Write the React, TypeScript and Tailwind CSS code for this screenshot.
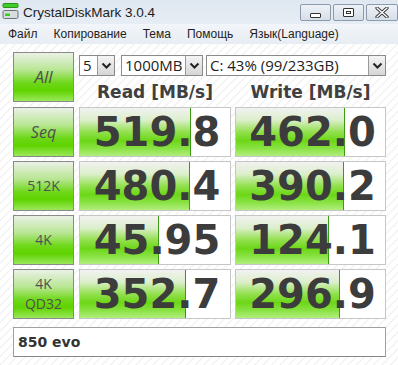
import React from 'react';

const hatch =
  'bg-white bg-[repeating-linear-gradient(135deg,#ffffff_0px,#ffffff_4px,#eeeeee_5px,#ffffff_6px)]';

const btnGrad =
  'bg-[linear-gradient(to_bottom,#eaf1e6_0%,#b9e694_35%,#6fd81a_62%,#5fd300_78%,#9be85a_100%)]';

const barGrad =
  'bg-[linear-gradient(to_bottom,#f2f2f1_0%,#dcefcc_25%,#92e04e_50%,#6cd716_68%,#8be346_85%,#b2ee7e_100%)]';

const rows = [
  { label: ['Seq'], read: '519.8', rw: 111, write: '462.0', ww: 109, italic: true },
  { label: ['512K'], read: '480.4', rw: 110, write: '390.2', ww: 108 },
  { label: ['4K'], read: '45.95', rw: 79, write: '124.1', ww: 93 },
  { label: ['4K', 'QD32'], read: '352.7', rw: 106, write: '296.9', ww: 104 },
];

function Arrow() {
  return (
    <div className="w-[17px] h-full flex items-center justify-center border-l border-[#9a9a9a] bg-[linear-gradient(to_bottom,#f4f4f4,#d6d6d6)]">
      <svg width="11" height="8" viewBox="0 0 11 8">
        <path d="M1.5 1.5 L5.5 5.5 L9.5 1.5" fill="none" stroke="#222" strokeWidth="2" />
      </svg>
    </div>
  );
}

function Select({ value, width }: { value: string; width: string }) {
  return (
    <div className={`${width} h-[21px] flex border border-[#8a8a8a] bg-white`}>
      <div className="flex-1 pl-[3px] text-[15px] leading-[19px] text-[#222]">{value}</div>
      <Arrow />
    </div>
  );
}

function Bar({ value, width }: { value: string; width: number }) {
  return (
    <div className="relative h-[50px] border border-[#c6c6c6] bg-white overflow-hidden">
      <div
        className={`absolute left-0 top-0 bottom-0 ${barGrad} border-r border-[#3c9a12]`}
        style={{ width }}
      />
      <div className="relative h-full flex items-center justify-center pl-[4px] text-[40px] font-bold leading-none text-[#3c3c3c] [font-family:'DejaVu_Sans',sans-serif]">
        {value}
      </div>
    </div>
  );
}

function WinBtn({ children, w }: { children: React.ReactNode; w: string }) {
  return (
    <div className={`${w} h-[17px] flex items-center justify-center border border-[#8c9aab] rounded-[2px] bg-[linear-gradient(to_bottom,#eef2f7,#d6dee8)]`}>
      {children}
    </div>
  );
}

export default function App() {
  return (
    <div className="w-[398px] h-[365px] overflow-hidden bg-[#f0f3f7] [font-family:'Open_Sans','DejaVu_Sans',sans-serif]">
      {/* title bar */}
      <div className="h-[24px] flex items-start bg-[linear-gradient(to_bottom,#dfe7f0,#e7edf4)]">
        <svg className="ml-[2px] mt-[3px]" width="17" height="16" viewBox="0 0 17 16">
          <rect x="1" y="0.5" width="15" height="4" rx="1" fill="#3fcf2a" stroke="#2c8f1e" />
          <rect x="1" y="7.5" width="15" height="8" rx="1.5" fill="#d8dcdf" stroke="#6b7177" />
          <rect x="3" y="10.5" width="5" height="2.5" fill="#35d11c" />
        </svg>
        <div className="ml-[4px] mt-[4px] text-[13.5px] leading-[18px] text-[#1e1e1e] [font-family:'Liberation_Sans',sans-serif]">
          CrystalDiskMark 3.0.4
        </div>
        <div className="ml-auto mt-[4px] flex gap-[2px]">
          <WinBtn w="w-[31px]">
            <div className="w-[11px] h-[5px] border border-[#333] rounded-[1px] bg-white mt-[5px]" />
          </WinBtn>
          <WinBtn w="w-[31px]">
            <div className="w-[11px] h-[9px] border border-[#333] rounded-[1px] bg-white flex items-center justify-center">
              <div className="w-[5px] h-[3px] border border-[#333]" />
            </div>
          </WinBtn>
          <WinBtn w="w-[32px]">
            <svg width="14" height="11" viewBox="0 0 14 11">
              <path d="M2 1 L12 10 M12 1 L2 10" stroke="#333" strokeWidth="3.2" strokeLinecap="round" />
              <path d="M2 1 L12 10 M12 1 L2 10" stroke="#fff" strokeWidth="1.4" strokeLinecap="round" />
            </svg>
          </WinBtn>
        </div>
      </div>

      {/* menu bar */}
      <div className="h-[20px] flex items-center pl-[8px] gap-[16px] text-[12px] text-[#1e1e1e] bg-[linear-gradient(to_bottom,#f2f5f9,#e8edf3)] [font-family:'Liberation_Sans',sans-serif]">
        <span>Файл</span>
        <span>Копирование</span>
        <span>Тема</span>
        <span>Помощь</span>
        <span>Язык(Language)</span>
      </div>

      {/* body */}
      <div className={`h-[321px] ${hatch} pl-[13px] pt-[8px]`}>
        <div className="flex">
          <div className={`w-[61px] h-[50px] border border-[#8a8a8a] ${btnGrad} flex items-center justify-center text-[17px] italic text-[#505050]`}>
            All
          </div>
          <div className="ml-[5px] flex flex-col">
            <div className="mt-[3px] flex">
              <Select value="5" width="w-[36px]" />
              <div className="ml-[6px]"><Select value="1000MB" width="w-[82px]" /></div>
              <div className="ml-[3px]"><Select value="C: 43% (99/233GB)" width="w-[180px]" /></div>
            </div>
            <div className="mt-[5px] flex text-[17px] font-bold text-[#404040] leading-[22px] [font-family:'DejaVu_Sans',sans-serif]">
              <div className="w-[152px] text-center">Read [MB/s]</div>
              <div className="ml-[4px] w-[151px] text-center">Write [MB/s]</div>
            </div>
          </div>
        </div>

        {rows.map((r) => (
          <div key={r.read} className="mt-[4px] flex">
            <div className={`w-[61px] h-[50px] border border-[#8a8a8a] ${btnGrad} flex flex-col items-center justify-center text-[#505050] leading-[20px] ${r.italic ? 'text-[16px] italic' : 'text-[14px]'}`}>
              {r.label.map((l) => (
                <span key={l}>{l}</span>
              ))}
            </div>
            <div className="ml-[5px] w-[152px]">
              <Bar value={r.read} width={r.rw} />
            </div>
            <div className="ml-[4px] w-[151px]">
              <Bar value={r.write} width={r.ww} />
            </div>
          </div>
        ))}

        <div className="mt-[8px] w-[373px] h-[30px] border border-[#a0a0a0] border-b-[#888] bg-white flex items-center pl-[4px] text-[14px] font-bold text-[#333] [font-family:'DejaVu_Sans',sans-serif]">
          850 evo
        </div>
      </div>
    </div>
  );
}
